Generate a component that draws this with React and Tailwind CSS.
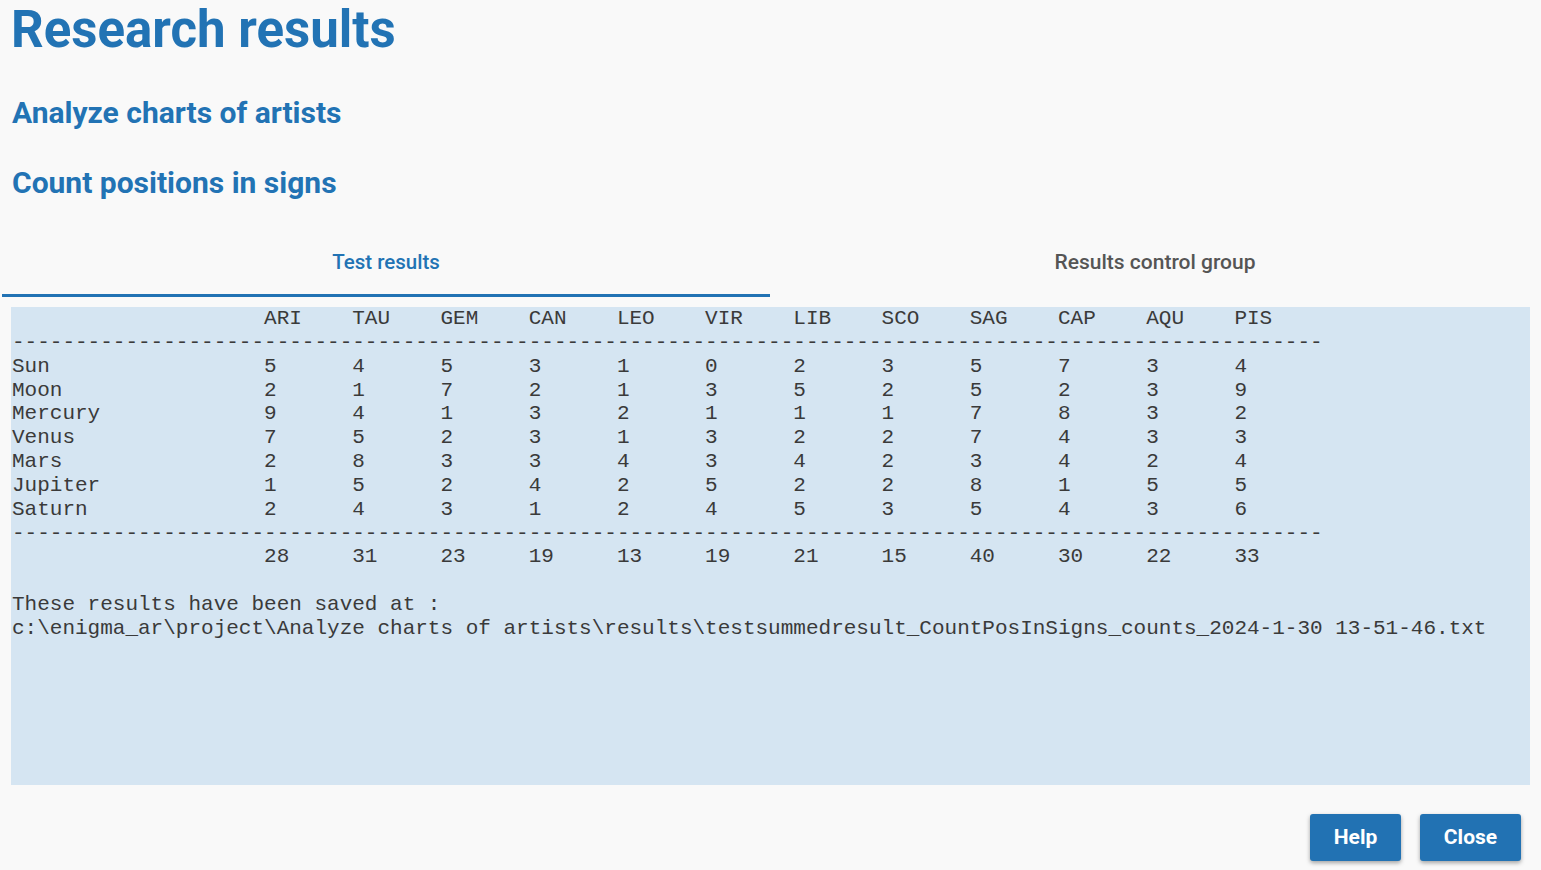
import React from "react";

const signs = ["ARI", "TAU", "GEM", "CAN", "LEO", "VIR", "LIB", "SCO", "SAG", "CAP", "AQU", "PIS"];
const rows = [
  ["Sun", [5, 4, 5, 3, 1, 0, 2, 3, 5, 7, 3, 4]],
  ["Moon", [2, 1, 7, 2, 1, 3, 5, 2, 5, 2, 3, 9]],
  ["Mercury", [9, 4, 1, 3, 2, 1, 1, 1, 7, 8, 3, 2]],
  ["Venus", [7, 5, 2, 3, 1, 3, 2, 2, 7, 4, 3, 3]],
  ["Mars", [2, 8, 3, 3, 4, 3, 4, 2, 3, 4, 2, 4]],
  ["Jupiter", [1, 5, 2, 4, 2, 5, 2, 2, 8, 1, 5, 5]],
  ["Saturn", [2, 4, 3, 1, 2, 4, 5, 3, 5, 4, 3, 6]],
];
const totals = [28, 31, 23, 19, 13, 19, 21, 15, 40, 30, 22, 33];

const pad = (s, n) => String(s).padEnd(n, " ");
const dashes = "-".repeat(104);
const lines = [
  pad("", 20) + signs.map((s) => pad(s, 7)).join(""),
  dashes,
  ...rows.map(([n, v]) => pad(n, 20) + v.map((x) => pad(x, 7)).join("")),
  dashes,
  pad("", 20) + totals.map((x) => pad(x, 7)).join(""),
  "",
  "These results have been saved at :",
  "c:\\enigma_ar\\project\\Analyze charts of artists\\results\\testsummedresult_CountPosInSigns_counts_2024-1-30 13-51-46.txt",
];

export default function App() {
  return (
    <div className="w-[1541px] h-[870px] bg-[#f9f9f9] overflow-hidden flex flex-col font-['Roboto',sans-serif]">
      <h1 className="pl-[11px] mt-[0px] text-[51px] leading-[60px] font-bold text-[#2273b4]">Research results</h1>
      <h2 className="pl-[12px] mt-[35px] text-[30px] leading-[36px] font-bold text-[#2273b4]">Analyze charts of artists</h2>
      <h2 className="pl-[12px] mt-[34px] text-[30px] leading-[36px] font-bold text-[#2273b4]">Count positions in signs</h2>
      <div className="mt-[29px] ml-[2px] w-[1538px] flex">
        <div className="w-[768px] h-[67px] flex items-center justify-center border-b-[3px] border-[#2273b4] text-[20.5px] leading-[24px] font-medium text-[#2273b4]">
          Test results
        </div>
        <div className="w-[770px] h-[67px] pb-[3px] flex items-center justify-center text-[21px] leading-[24px] font-medium text-[#555555]">
          Results control group
        </div>
      </div>
      <pre className="mt-[10px] ml-[11px] w-[1519px] h-[478px] bg-[#d5e5f2] pl-[1px] text-[21px] leading-[23.85px] text-[#3a3a3a] font-['Courier_New','Nimbus_Mono_PS','FreeMono','Liberation_Mono',monospace] whitespace-pre overflow-hidden">
        {lines.join("\n")}
      </pre>
      <div className="mt-[29px] pr-[20px] flex justify-end gap-[19px]">
        <button className="w-[91px] h-[47px] bg-[#2272b3] text-white text-[21px] font-bold rounded-[3px] shadow-[0_2px_4px_rgba(0,0,0,0.35)]">Help</button>
        <button className="w-[101px] h-[47px] bg-[#2272b3] text-white text-[21px] font-bold rounded-[3px] shadow-[0_2px_4px_rgba(0,0,0,0.35)]">Close</button>
      </div>
    </div>
  );
}
